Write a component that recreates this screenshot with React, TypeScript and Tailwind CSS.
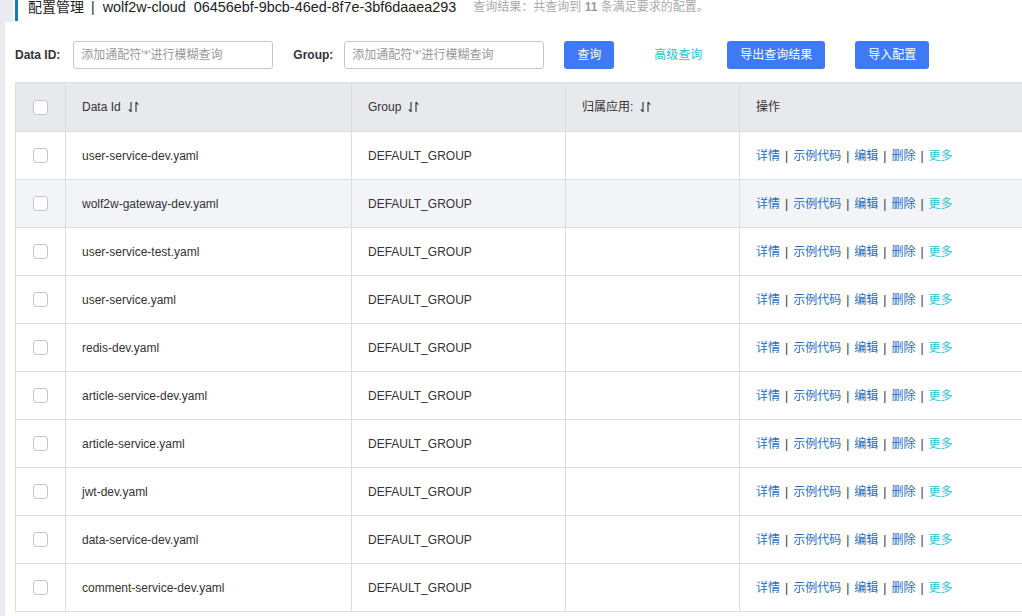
const rows = [
  "user-service-dev.yaml",
  "wolf2w-gateway-dev.yaml",
  "user-service-test.yaml",
  "user-service.yaml",
  "redis-dev.yaml",
  "article-service-dev.yaml",
  "article-service.yaml",
  "jwt-dev.yaml",
  "data-service-dev.yaml",
  "comment-service-dev.yaml",
];

function SortIcon() {
  return (
    <svg width="11" height="12" viewBox="0 0 11 12" className="ml-[7px] inline-block" fill="none" stroke="#333" strokeWidth="1.1">
      <path d="M3 1v10M3 11L0.8 8.4" />
      <path d="M8 11V1M8 1l2.2 2.6" />
    </svg>
  );
}

function Checkbox() {
  return <span className="block h-[15px] w-[15px] rounded-[3px] border border-[#c4c6cf] bg-white" />;
}

function Actions() {
  const sep = <span className="mx-[5px] text-[#333]">|</span>;
  return (
    <div className="flex items-center text-[12px] text-[#1e6ec8]">
      <span>详情</span>
      {sep}
      <span>示例代码</span>
      {sep}
      <span>编辑</span>
      {sep}
      <span>删除</span>
      {sep}
      <span className="text-[#2cc3d8]">更多</span>
    </div>
  );
}

export default function App() {
  return (
    <div
      className="flex h-[616px] w-[1022px] overflow-hidden bg-white text-[#333]"
      style={{ fontFamily: '"Liberation Sans", "Noto Sans CJK SC", sans-serif' }}
    >
      <div className="flex w-[5px] shrink-0 flex-col bg-[#e9ebf0]" />
      <div className="min-w-0 flex-1 pl-[10px]">
        <div className="relative flex h-[21px] items-start">
          <div className="absolute -left-[15px] top-0 h-[22px] w-[13px] bg-[#e9ebf0]" />
          <span className="h-[21px] w-[3px] bg-[#1a78c2]" />
          <span className="ml-[10px] flex text-[14px] leading-[15px] text-[#222]">
            <span>配置管理</span>
            <span className="ml-[7px] mr-[8px]">|</span>
            <span className="text-[14.4px]">wolf2w-cloud&nbsp;&nbsp;06456ebf-9bcb-46ed-8f7e-3bf6daaea293</span>
          </span>
          <span className="ml-[17px] text-[12px] leading-[15px] text-[#aaa]">
            查询结果：共查询到 <b className="text-[#999]">11</b> 条满足要求的配置。
          </span>
        </div>

        <div className="mt-[20px] flex h-[28px] items-center text-[12px]">
          <span className="font-bold text-[#333]">Data ID:</span>
          <div className="ml-[13px] flex h-[28px] w-[200px] items-center rounded-[3px] border border-[#c4c6cf] pl-[7px] text-[#999]">
            添加通配符'*'进行模糊查询
          </div>
          <span className="ml-[20px] font-bold text-[#333]">Group:</span>
          <div className="ml-[11px] flex h-[28px] w-[200px] items-center rounded-[3px] border border-[#c4c6cf] pl-[7px] text-[#999]">
            添加通配符'*'进行模糊查询
          </div>
          <button className="ml-[20px] h-[28px] w-[50px] rounded-[3px] bg-[#3e7af6] text-white">查询</button>
          <span className="ml-[40px] text-[#22c3d8]">高级查询</span>
          <button className="ml-[25px] h-[28px] w-[98px] rounded-[3px] bg-[#3e7af6] text-white">导出查询结果</button>
          <button className="ml-[30px] h-[28px] w-[74px] rounded-[3px] bg-[#3e7af6] text-white">导入配置</button>
        </div>

        <div className="mt-[13px] w-[1040px] border-l border-t border-[#dcdee3] text-[12px]">
          <div className="flex h-[49px] items-center border-b border-[#dcdee3] bg-[#e8e9ed]">
            <div className="flex h-full w-[50px] items-center justify-center border-r border-[#dcdee3] pr-[1px]">
              <Checkbox />
            </div>
            <div className="flex h-full w-[286px] items-center border-r border-[#dcdee3] pl-[16px]">
              Data Id <SortIcon />
            </div>
            <div className="flex h-full w-[214px] items-center border-r border-[#dcdee3] pl-[16px]">
              Group <SortIcon />
            </div>
            <div className="flex h-full w-[174px] items-center border-r border-[#dcdee3] pl-[16px]">
              归属应用: <SortIcon />
            </div>
            <div className="flex h-full flex-1 items-center pl-[16px]">操作</div>
          </div>
          {rows.map((name, i) => (
            <div
              key={name}
              className={`flex h-[48px] items-center border-b border-[#dcdee3] ${i === 1 ? "bg-[#f2f4f7]" : "bg-white"}`}
            >
              <div className="flex h-full w-[50px] items-center justify-center border-r border-[#dcdee3] pr-[1px]">
                <Checkbox />
              </div>
              <div className="flex h-full w-[286px] items-center border-r border-[#dcdee3] pl-[16px]">{name}</div>
              <div className="flex h-full w-[214px] items-center border-r border-[#dcdee3] pl-[16px]">DEFAULT_GROUP</div>
              <div className="h-full w-[174px] border-r border-[#dcdee3]" />
              <div className="flex h-full flex-1 items-center pl-[16px]">
                <Actions />
              </div>
            </div>
          ))}
        </div>
      </div>
    </div>
  );
}
